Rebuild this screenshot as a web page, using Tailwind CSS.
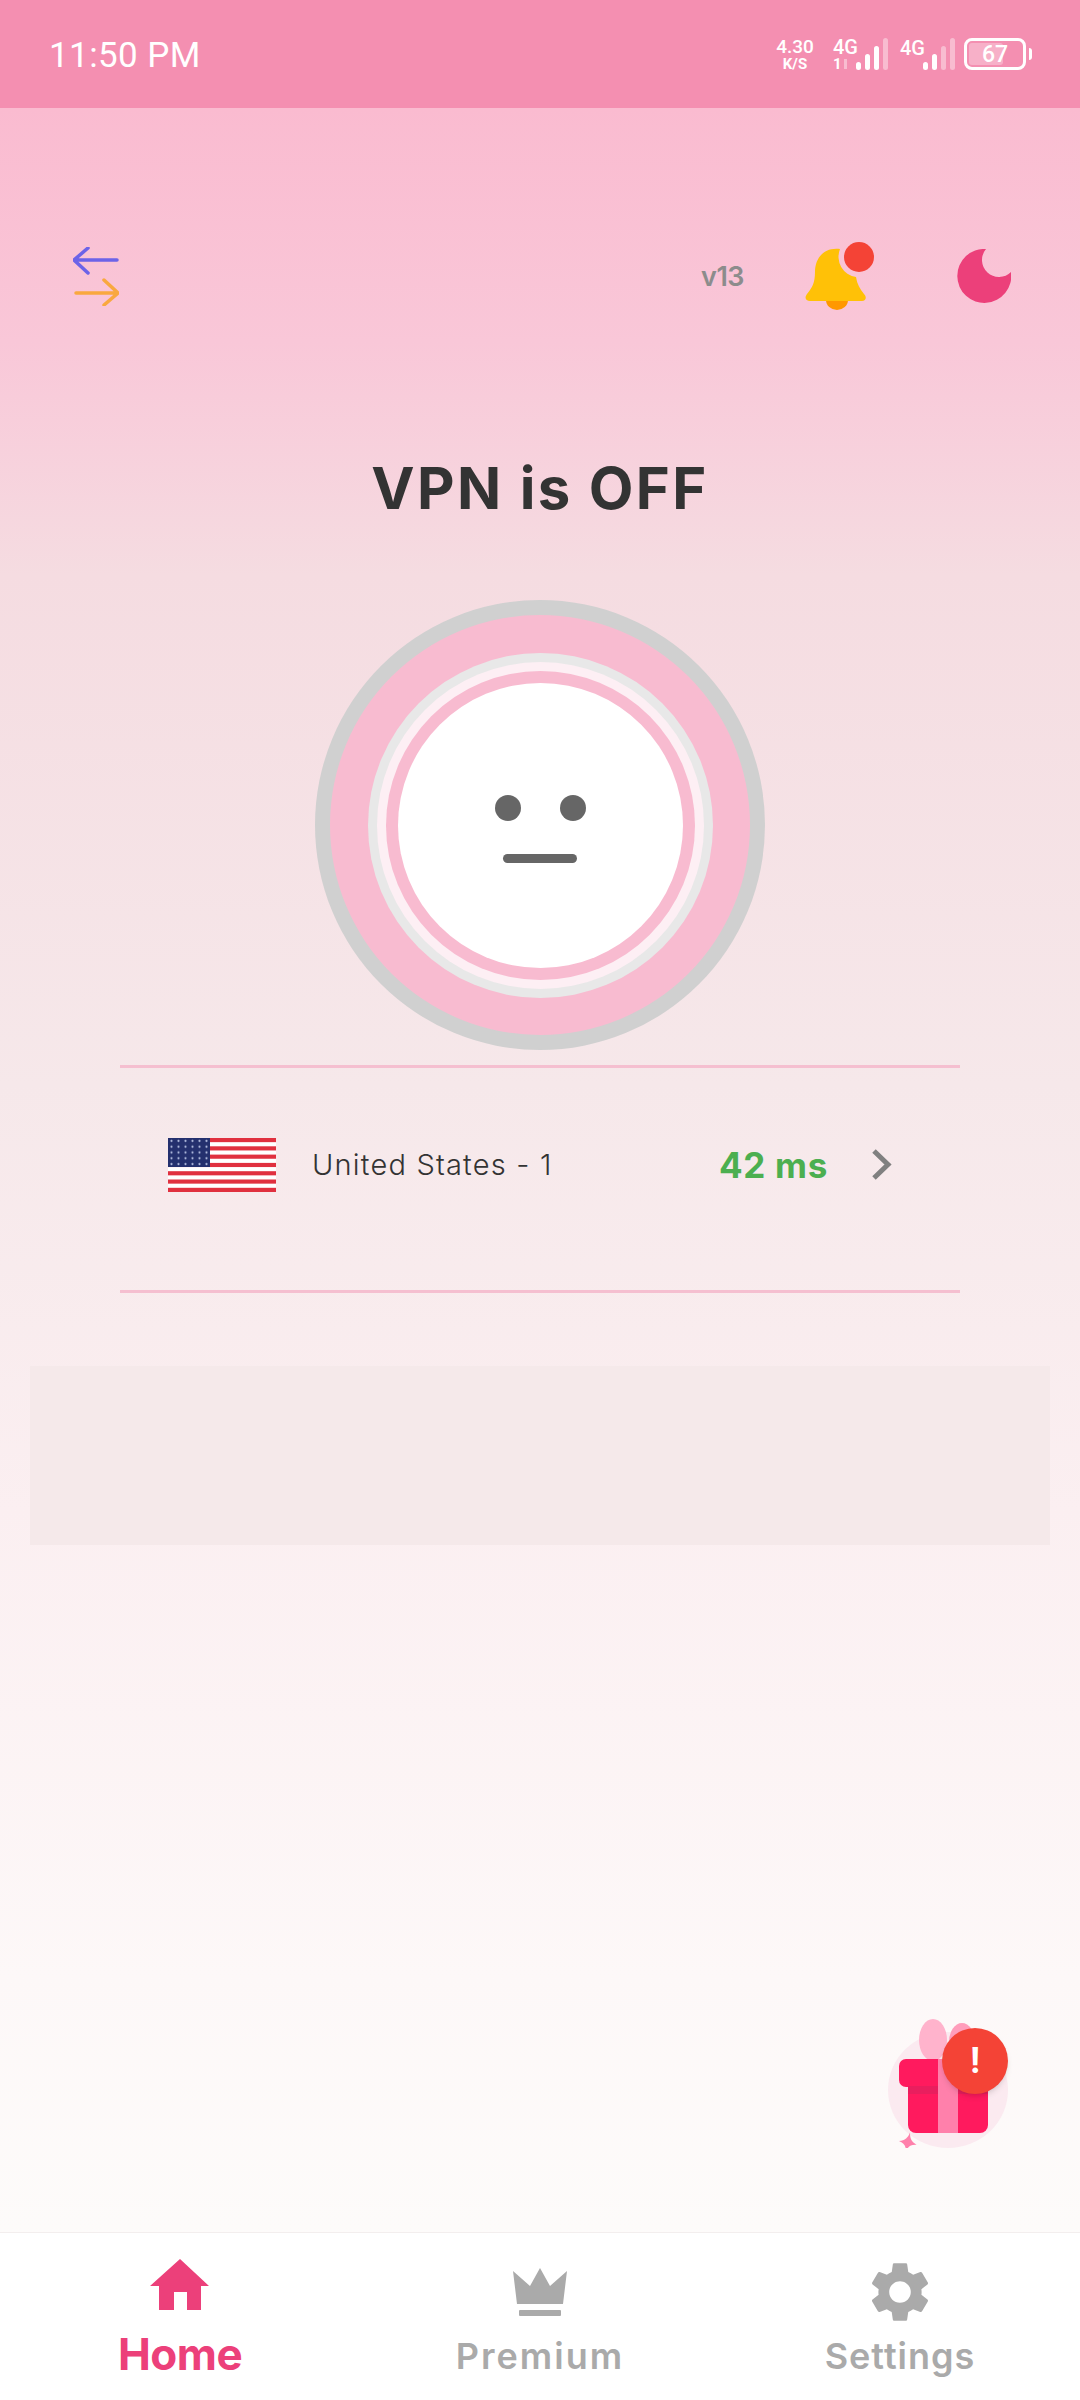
<!DOCTYPE html>
<html lang="en">
<head>
    <meta charset="UTF-8">
    <meta name="viewport" content="width=device-width, initial-scale=1.0">
    <title>VPN</title>
    <script src="https://cdn.jsdelivr.net/npm/@tailwindcss/browser@4"></script>
</head>
<body class="bg-white font-['Inter',sans-serif]">

<div class="w-[1080px] h-[2400px] flex flex-col overflow-hidden">

    <!-- Status bar -->
    <div class="h-[108px] shrink-0 bg-[#f48fb1] flex items-center justify-between pl-[49px] pr-[48px] text-white font-['Roboto',sans-serif]">
        <span class="text-[35px] leading-none tracking-[0.4px] mt-[2px]">11:50 PM</span>
        <div class="flex items-center h-[32px]">
            <div class="w-[38px] flex flex-col items-center font-medium leading-none">
                <span class="text-[19px] h-[19px]">4.30</span>
                <span class="text-[15px] font-bold mt-[1px]">K/S</span>
            </div>
            <div class="ml-[19px] w-[24px] flex flex-col font-medium leading-none">
                <span class="text-[20px] h-[19px]">4G</span>
                <span class="text-[15px] font-bold mt-[1px] flex items-center gap-[2px]">1<i class="w-[3px] h-[10px] bg-white/40"></i></span>
            </div>
            <div class="ml-[-1px] flex items-end gap-[4px] h-[32px]">
                <i class="w-[5px] h-[8px] rounded-full bg-white"></i>
                <i class="w-[5px] h-[16px] rounded-full bg-white"></i>
                <i class="w-[5px] h-[24px] rounded-full bg-white"></i>
                <i class="w-[5px] h-[32px] rounded-full bg-white/40"></i>
            </div>
            <div class="ml-[12px] w-[24px] self-start text-[20px] font-medium leading-none">4G</div>
            <div class="ml-[-1px] flex items-end gap-[4px] h-[32px]">
                <i class="w-[5px] h-[8px] rounded-full bg-white"></i>
                <i class="w-[5px] h-[16px] rounded-full bg-white"></i>
                <i class="w-[5px] h-[24px] rounded-full bg-white/40"></i>
                <i class="w-[5px] h-[32px] rounded-full bg-white/40"></i>
            </div>
            <div class="ml-[9px] relative w-[62px] h-[32px] border-[3px] border-white rounded-[8px] flex items-center justify-center">
                <div class="absolute left-[2px] top-[2px] bottom-[2px] w-[34px] bg-white/30 rounded-[3px]"></div>
                <span class="relative text-[23px] font-medium leading-none">67</span>
            </div>
            <i class="ml-[3px] w-[3px] h-[12px] rounded-r-full bg-white"></i>
        </div>
    </div>

    <!-- Main content -->
    <div class="relative flex-1 flex flex-col bg-[linear-gradient(180deg,#fabbd0_0%,#f9c7d8_11%,#f5dce1_22%,#f6e8ea_46%,#fbeff1_66%,#fdf8f8_88%,#fdfbfa_100%)]">

        <!-- Top row -->
        <div class="mt-[132px] h-[72px] flex items-center pl-[73px] pr-[69px]">
            <svg class="w-[46px] h-[59px]" viewBox="73 246 46 59" fill="none" stroke-width="3.5" stroke-linecap="round" stroke-linejoin="round">
                <path d="M117 259H74M88 247L74 259L88 272" stroke="#6c63e8"/>
                <path d="M76 292H118M104 279L118 292L104 304" stroke="#f9a83f"/>
            </svg>
            <span class="ml-auto text-[27px] font-semibold text-[#8c8c8c] tracking-[-0.5px] mt-[2px]">v13</span>
            <svg class="ml-[60px] w-[70px] h-[72px]" viewBox="804 240 70 72">
                <path d="M826 300a11 10 0 0 0 22 0z" fill="#ff9800"/>
                <path d="M840 249C824 247 815 258 815 272C815 283 812 288 807 294C804 298 806 301 810 301H862C866 301 867 297 864 294C860 289 857 284 856 277A20.5 20.5 0 0 1 840 249Z" fill="#ffc107"/>
                <circle cx="859" cy="257" r="15" fill="#f44336"/>
            </svg>
            <svg class="ml-[83px] w-[54px] h-[54px]" viewBox="957 249 54 54">
                <path d="M986 249A27 27 0 1 0 1011 272A17 17 0 0 1 986 249Z" fill="#ec407a"/>
            </svg>
        </div>

        <!-- Status title -->
        <h1 class="mt-[141px] text-center text-[58px] leading-[70px] font-bold text-[#333333] tracking-[2.4px]">VPN is OFF</h1>

        <!-- Connect button -->
        <div class="mt-[77px] self-center w-[450px] h-[450px] rounded-full bg-[#d0d0d0] flex items-center justify-center">
            <div class="w-[420px] h-[420px] rounded-full bg-[#f8bbd0] flex items-center justify-center">
                <div class="w-[345px] h-[345px] rounded-full bg-[#e8e8e8] flex items-center justify-center">
                    <div class="w-[327px] h-[327px] rounded-full bg-[#fdeff4] flex items-center justify-center">
                        <div class="w-[309px] h-[309px] rounded-full bg-[#f8bbd0] flex items-center justify-center">
                            <div class="w-[285px] h-[285px] rounded-full bg-white flex flex-col items-center pt-[112px]">
                                <div class="flex gap-[39px]">
                                    <div class="w-[26px] h-[26px] rounded-full bg-[#666666]"></div>
                                    <div class="w-[26px] h-[26px] rounded-full bg-[#666666]"></div>
                                </div>
                                <div class="mt-[33px] w-[74px] h-[9px] rounded-full bg-[#666666]"></div>
                            </div>
                        </div>
                    </div>
                </div>
            </div>
        </div>

        <!-- Server row -->
        <div class="mt-[15px] mx-[120px] h-[228px] border-y-[3px] border-[#f5bfd0] flex items-center pl-[48px] pb-[28px]">
            <svg class="w-[108px] h-[54px] shrink-0" viewBox="0 0 108 54">
                <defs>
                    <pattern id="stars" width="7" height="5.8" patternUnits="userSpaceOnUse">
                        <circle cx="3.5" cy="2.9" r="1.1" fill="#aab4d8"/>
                    </pattern>
                </defs>
                <rect width="108" height="54" fill="#fff"/>
                <g fill="#e0303f">
                    <rect y="0" width="108" height="4.15"/>
                    <rect y="8.3" width="108" height="4.15"/>
                    <rect y="16.6" width="108" height="4.15"/>
                    <rect y="24.9" width="108" height="4.15"/>
                    <rect y="33.2" width="108" height="4.15"/>
                    <rect y="41.5" width="108" height="4.15"/>
                    <rect y="49.8" width="108" height="4.2"/>
                </g>
                <rect width="42" height="29" fill="#24306e"/>
                <rect width="42" height="29" fill="url(#stars)"/>
            </svg>
            <span class="ml-[36px] text-[29px] font-light text-[#333333] tracking-[1.2px]">United States - 1</span>
            <span class="ml-auto text-[35px] font-bold text-[#4caf50] tracking-[0.7px]">42 ms</span>
            <svg class="ml-[43px] mr-[68px] w-[21px] h-[31px] mb-[2px]" viewBox="0 0 21 31" fill="none" stroke="#808080" stroke-width="5">
                <path d="M3 2L17 15.5L3 29"/>
            </svg>
        </div>

        <!-- Ad placeholder -->
        <div class="mt-[73px] mx-[30px] h-[179px] bg-[#f5e9ea]"></div>

        <!-- Gift button -->
        <div class="absolute right-[72px] bottom-[84px] w-[120px] h-[130px]">
            <svg class="w-[120px] h-[130px]" viewBox="888 2018 120 130">
                <ellipse cx="948" cy="2090" rx="60" ry="58" fill="#fbeaf0"/>
                <ellipse cx="933" cy="2040" rx="14" ry="21" fill="#ffb3cc"/>
                <ellipse cx="962" cy="2042" rx="13" ry="19" fill="#ff9dbb"/>
                <path d="M908 2086H988V2125a8 8 0 0 1-8 8H916a8 8 0 0 1-8-8z" fill="#ff1a5e"/>
                <rect x="899" y="2059" width="95" height="28" rx="7" fill="#ff1a5e"/>
                <rect x="908" y="2086" width="80" height="8" fill="#e91e5e"/>
                <rect x="938" y="2059" width="20" height="74" fill="#ff80ab"/>
                <path d="M908 2132c1 6 3 9 9 11c-6 1-8 3-9 9c-1-6-4-8-9-9c6-2 8-5 9-11z" fill="#ff80ab" transform="rotate(12 908 2142)"/>
            </svg>
            <div class="absolute left-[54px] top-[10px] w-[66px] h-[66px] rounded-full bg-[#f44336] shadow-md flex items-center justify-center text-white text-[36px] font-bold leading-none font-['Roboto',sans-serif]">!</div>
        </div>
    </div>

    <!-- Bottom nav -->
    <div class="h-[168px] shrink-0 bg-white border-t border-[#f3eeee] grid grid-cols-[360px_360px_360px]">
        <div class="flex flex-col items-center text-[#ec407a]">
            <svg class="mt-[26px] w-[60px] h-[52px]" viewBox="150 2259 60 52" fill="currentColor">
                <path d="M180 2259L209 2286H201V2310H187V2292H174V2310H159V2286H150Z"/>
            </svg>
            <span class="mt-[19px] text-[44px] leading-[48px] font-bold tracking-[-0.5px]">Home</span>
        </div>
        <div class="flex flex-col items-center text-[#aaaaaa]">
            <svg class="mt-[35px] w-[54px] h-[48px]" viewBox="513 2268 54 48" fill="currentColor">
                <path d="M513 2271L530 2286L540 2268L550 2286L567 2271L563 2304H517Z"/>
                <rect x="519" y="2310" width="42" height="6" rx="1"/>
            </svg>
            <span class="mt-[19px] text-[36px] leading-[42px] font-semibold tracking-[2px]">Premium</span>
        </div>
        <div class="flex flex-col items-center text-[#aaaaaa]">
            <svg class="mt-[23px] w-[72px] h-[72px]" viewBox="0 0 24 24" fill="currentColor">
                <path d="M19.14 12.94c.04-.3.06-.61.06-.94 0-.32-.02-.64-.07-.94l2.03-1.58c.18-.14.23-.41.12-.61l-1.92-3.32c-.12-.22-.37-.29-.59-.22l-2.39.96c-.5-.38-1.03-.7-1.62-.94l-.36-2.54c-.04-.24-.24-.41-.48-.41h-3.84c-.24 0-.43.17-.47.41l-.36 2.54c-.59.24-1.13.57-1.62.94l-2.39-.96c-.22-.08-.47 0-.59.22L2.74 8.87c-.12.21-.08.47.12.61l2.03 1.58c-.05.3-.09.63-.09.94s.02.64.07.94l-2.03 1.58c-.18.14-.23.41-.12.61l1.92 3.32c.12.22.37.29.59.22l2.39-.96c.5.38 1.03.7 1.62.94l.36 2.54c.05.24.24.41.48.41h3.84c.24 0 .44-.17.47-.41l.36-2.54c.59-.24 1.13-.56 1.62-.94l2.39.96c.22.08.47 0 .59-.22l1.92-3.32c.12-.22.07-.47-.12-.61l-2.01-1.58zM12 15.6c-1.98 0-3.6-1.62-3.6-3.6s1.62-3.6 3.6-3.6 3.6 1.62 3.6 3.6-1.62 3.6-3.6 3.6z"/>
            </svg>
            <span class="mt-[7px] text-[36px] leading-[42px] font-semibold tracking-[1px]">Settings</span>
        </div>
    </div>
</div>

</body>
</html>
